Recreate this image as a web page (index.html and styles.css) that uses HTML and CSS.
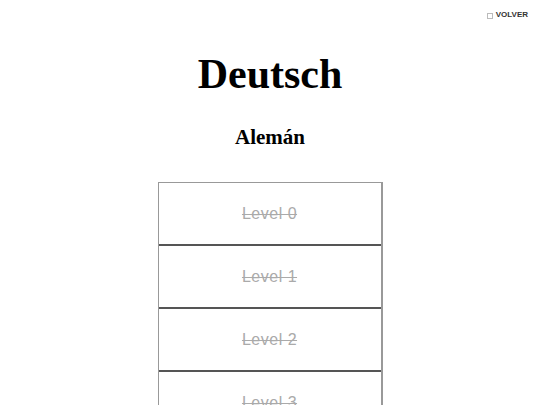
FILE: index.html
```html
<!DOCTYPE html>
<html>
<head>
<meta charset="utf-8">
<link rel="stylesheet" href="styles.css">
</head>
<body>
<div class="topbar">
  <a class="back"><span class="box"></span>VOLVER</a>
</div>
<h1 class="title">Deutsch</h1>
<h2 class="subtitle">Alemán</h2>
<div class="levels">
  <div class="level"><span>Level 0</span></div>
  <div class="level"><span>Level 1</span></div>
  <div class="level"><span>Level 2</span></div>
  <div class="level"><span>Level 3</span></div>
  <div class="level"><span>Level 4</span></div>
</div>
</body>
</html>
```

FILE: styles.css
```css
html, body {
  margin: 0;
  padding: 0;
  background: #fff;
  overflow: hidden;
}
body {
  font-family: "Liberation Serif", serif;
  height: 405px;
}
.topbar {
  display: flex;
  justify-content: flex-end;
  padding: 9px 12px 0 0;
  height: 12px;
}
.back {
  display: flex;
  align-items: center;
  gap: 3px;
  font-family: "Liberation Sans", sans-serif;
  font-weight: bold;
  font-size: 8px;
  color: #333;
  line-height: 10px;
}
.box {
  width: 4px;
  height: 4px;
  border: 1px solid #bbb;
  margin-top: 1px;
}
.title {
  margin: 0;
  font-size: 42px;
  font-weight: bold;
  text-align: center;
  line-height: 48px;
  margin-top: 29px;
}
.subtitle {
  margin: 0;
  font-size: 21px;
  font-weight: bold;
  text-align: center;
  line-height: 24px;
  margin-top: 27px;
}
.levels {
  width: 222px;
  margin: 33px auto 0;
  border-left: 1px solid #999;
  border-right: 2px solid #999;
  border-top: 1px solid #999;
}
.level {
  height: 61px;
  display: flex;
  align-items: center;
  justify-content: center;
  border-bottom: 2px solid #555;
  font-family: "Liberation Sans", sans-serif;
  font-size: 16px;
  letter-spacing: 0.5px;
  color: #aaa;
  text-decoration: line-through;
}
```
